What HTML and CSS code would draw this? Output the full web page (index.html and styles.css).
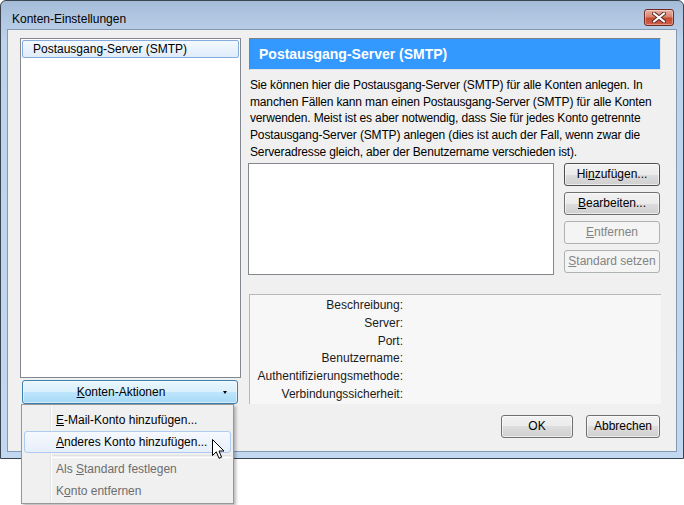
FILE: index.html
```html
<!DOCTYPE html>
<html lang="de">

<head>
  <meta charset="UTF-8" />
  <title>Konten-Einstellungen</title>
  <link rel="stylesheet" href="styles.css">
</head>

<body>
  <div class="window">
    <div class="titlebar">
      <span class="title">Konten-Einstellungen</span>
      <div class="close-btn">
        <svg width="14" height="11" viewBox="0 0 14 11">
          <path d="M2 1.5 L12 9.5 M12 1.5 L2 9.5" stroke="#5a2a24" stroke-width="4" stroke-linecap="round" />
          <path d="M2 1.5 L12 9.5 M12 1.5 L2 9.5" stroke="#ffffff" stroke-width="2.2" stroke-linecap="round" />
        </svg>
      </div>
    </div>

    <div class="client">
      <div class="left-col">
        <div class="account-list">
          <div class="account-item selected">Postausgang-Server (SMTP)</div>
        </div>
        <button class="actions-btn">
          <span class="actions-label"><u>K</u>onten-Aktionen</span>
          <span class="arrow"></span>
        </button>
      </div>

      <div class="right-col">
        <div class="page-header">Postausgang-Server (SMTP)</div>
        <p class="intro">Sie können hier die Postausgang-Server (SMTP) für alle Konten anlegen. In<br>
          manchen Fällen kann man einen Postausgang-Server (SMTP) für alle Konten<br>
          verwenden. Meist ist es aber notwendig, dass Sie für jedes Konto getrennte<br>
          Postausgang-Server (SMTP) anlegen (dies ist auch der Fall, wenn zwar die<br>
          Serveradresse gleich, aber der Benutzername verschieden ist).</p>

        <div class="server-area">
          <div class="server-list"></div>
          <div class="server-buttons">
            <button class="btn focused">Hi<u>n</u>zufügen...</button>
            <button class="btn"><u>B</u>earbeiten...</button>
            <button class="btn" disabled><u>E</u>ntfernen</button>
            <button class="btn" disabled><u>S</u>tandard setzen</button>
          </div>
        </div>

        <div class="details">
          <div class="detail-label">Beschreibung:</div><div class="detail-value"></div>
          <div class="detail-label">Server:</div><div class="detail-value"></div>
          <div class="detail-label">Port:</div><div class="detail-value"></div>
          <div class="detail-label">Benutzername:</div><div class="detail-value"></div>
          <div class="detail-label">Authentifizierungsmethode:</div><div class="detail-value"></div>
          <div class="detail-label">Verbindungssicherheit:</div><div class="detail-value"></div>
        </div>

        <div class="dialog-buttons">
          <button class="btn ok-btn">OK</button>
          <button class="btn cancel-btn">Abbrechen</button>
        </div>
      </div>
    </div>
  </div>

  <!-- popup menu of the Konten-Aktionen button -->
  <div class="menu">
    <div class="menu-item"><u>E</u>-Mail-Konto hinzufügen...</div>
    <div class="menu-item hover"><u>A</u>nderes Konto hinzufügen...</div>
    <div class="menu-separator"></div>
    <div class="menu-item disabled">Als <u>S</u>tandard festlegen</div>
    <div class="menu-item disabled">K<u>o</u>nto entfernen</div>
  </div>

  <svg class="cursor" width="13" height="21" viewBox="0 0 13 21">
    <path d="M0.5 0.5 L0.5 16.5 L4.3 12.8 L7 19.3 L9.6 18.2 L7 12 L12 12 Z" fill="#ffffff" stroke="#000000" stroke-width="1" stroke-linejoin="miter" />
  </svg>
</body>

</html>
```

FILE: styles.css
```css
/* Base */
* {
  box-sizing: border-box;
  margin: 0;
  padding: 0;
}

body {
  font-family: 'Liberation Sans', Arial, sans-serif;
  font-size: 12px;
  color: #000;
  background-color: #ffffff;
  width: 684px;
  height: 505px;
  position: relative;
  overflow: hidden;
}

u {
  text-decoration: underline;
  text-underline-offset: 1px;
}

/* Window frame */
.window {
  width: 684px;
  height: 459px;
  border: 1px solid #3c4450;
  border-radius: 6px 6px 0 0;
  background: linear-gradient(#a5bcd8 0px, #b3c9e3 20px, #bcd3ec 40px, #c1d8f0 100%);
  display: flex;
  flex-direction: column;
}

.titlebar {
  height: 28px;
  display: flex;
  align-items: flex-start;
  justify-content: space-between;
  padding: 8px 9px 0 11px;
}

.title {
  margin-top: 2px;
  line-height: 16px;
  color: #000;
}

.close-btn {
  width: 30px;
  height: 17px;
  border: 1px solid #6e2a20;
  border-radius: 3px;
  background: linear-gradient(#eab3a8 0%, #d9826f 45%, #c74a30 55%, #d2604a 100%);
  box-shadow: inset 0 0 0 1px rgba(255, 255, 255, 0.35);
  display: flex;
  align-items: center;
  justify-content: center;
}

.client {
  flex: 1;
  margin: 0 6px 6px 6px;
  border: 1px solid #8498b2;
  background-color: #f0f0f0;
  display: flex;
  padding: 8px 15px 0 12px;
  gap: 8px;
}

/* Left column */
.left-col {
  width: 221px;
  display: flex;
  flex-direction: column;
}

.account-list {
  height: 340px;
  background-color: #ffffff;
  border: 1px solid #828790;
  padding: 1px;
}

.account-item {
  height: 18px;
  line-height: 16px;
  padding-left: 10px;
  border: 1px solid transparent;
}

.account-item.selected {
  border-color: #84acdd;
  border-radius: 2px;
  background: linear-gradient(#f4f9fe, #dfecfb);
}

.actions-btn {
  margin: 2px 3px 0 2px;
  height: 24px;
  font: inherit;
  color: #000;
  border: 1px solid #3c7fb1;
  border-radius: 3px;
  background: linear-gradient(#eaf6fd 0%, #d9f0fc 50%, #bee6fd 50%, #a7d9f5 100%);
  box-shadow: inset 0 0 0 1px rgba(255, 255, 255, 0.5);
  display: flex;
  align-items: center;
}

.actions-label {
  flex: 1;
  text-align: center;
}

.arrow {
  width: 0;
  height: 0;
  border-left: 2.5px solid transparent;
  border-right: 2.5px solid transparent;
  border-top: 3px solid #000;
  margin: 1px 10px 0 4px;
}

/* Right column */
.right-col {
  width: 412px;
  display: flex;
  flex-direction: column;
}

.page-header {
  height: 32px;
  border: 1px solid;
  border-color: #808080 #e4e4e4 #e4e4e4 #808080;
  background-color: #3399ff;
  color: #ffffff;
  font-weight: bold;
  font-size: 14px;
  line-height: 30px;
  padding-left: 9px;
}

.intro {
  margin-top: 7px;
  padding-left: 1px;
  line-height: 16.7px;
  letter-spacing: -0.15px;
  white-space: nowrap;
}

.server-area {
  display: flex;
  margin-top: 2px;
}

.server-list {
  width: 306px;
  height: 112px;
  margin-left: -1px;
  background-color: #ffffff;
  border: 1px solid #828790;
}

.server-buttons {
  margin-left: 10px;
  width: 96px;
  display: flex;
  flex-direction: column;
  gap: 6px;
}

.btn {
  height: 23px;
  font: inherit;
  color: #000;
  border: 1px solid #707070;
  border-radius: 3px;
  background: linear-gradient(#f2f2f2 0%, #ebebeb 50%, #dddddd 50%, #cfcfcf 100%);
  box-shadow: inset 0 0 0 1px rgba(255, 255, 255, 0.6);
}

.btn.focused {
  border-color: #4e4e4e;
}

.btn:disabled {
  border-color: #adb2b5;
  background: #f4f4f4;
  color: #838383;
  box-shadow: none;
}

/* Details */
.details {
  margin-top: 19px;
  height: 110px;
  background-color: #f7f7f7;
  border-top: 1px solid #b9b9b9;
  border-left: 1px solid #b9b9b9;
  padding-top: 2px;
  display: grid;
  grid-template-columns: 153px 1fr;
  grid-auto-rows: 17.7px;
  align-items: center;
}

.detail-label {
  text-align: right;
  color: #1a1a1a;
}

/* Dialog buttons */
.dialog-buttons {
  margin-top: 11px;
  display: flex;
  justify-content: flex-end;
  gap: 13px;
  padding-right: 1px;
}

.ok-btn {
  width: 72px;
}

.cancel-btn {
  width: 74px;
}

/* Popup menu */
.menu {
  position: absolute;
  left: 21px;
  top: 404px;
  width: 213px;
  height: 100px;
  border: 1px solid #979797;
  background-color: #f0f0f0;
  box-shadow: 2px 2px 3px rgba(0, 0, 0, 0.28);
  padding: 4px 2px 1px 2px;
}

.menu::before {
  content: "";
  position: absolute;
  top: 1px;
  bottom: 1px;
  left: 28px;
  width: 1px;
  background-color: #e2e3e3;
  border-right: 1px solid #ffffff;
  box-sizing: content-box;
}

.menu-item {
  position: relative;
  height: 22px;
  line-height: 20px;
  padding-left: 31px;
  border: 1px solid transparent;
  border-radius: 3px;
}

.menu-item.hover {
  border-color: #aeccf1;
  background: linear-gradient(#f6f9fd, #e6eff9);
}

.menu-item.disabled {
  color: #6d6d6d;
}

.menu-separator {
  position: relative;
  height: 5px;
  margin-left: 28px;
  border-bottom: 1px solid #ffffff;
  padding-top: 2px;
}

.menu-separator::after {
  content: "";
  display: block;
  height: 1px;
  background-color: #e0e0e0;
}

.cursor {
  position: absolute;
  left: 212px;
  top: 439px;
}
```
